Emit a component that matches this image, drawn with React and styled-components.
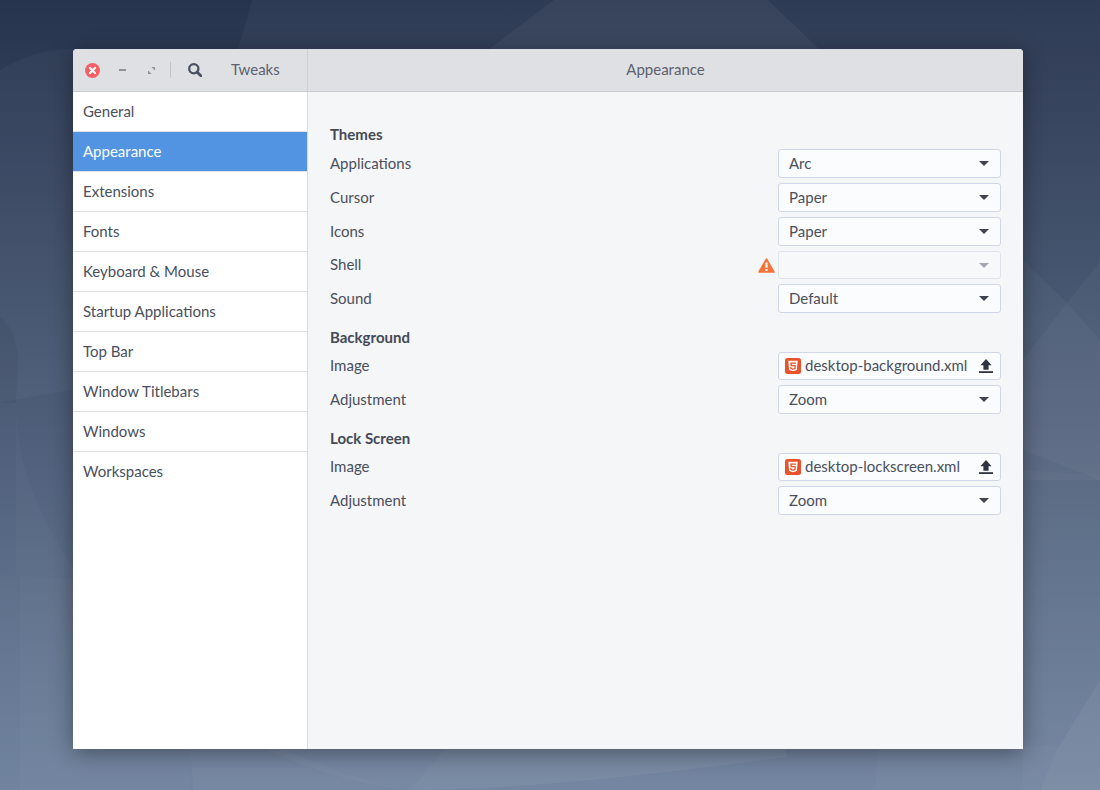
import React from "react";
import styled, { createGlobalStyle } from "styled-components";

const Global = createGlobalStyle`
  html, body { margin: 0; padding: 0; }
  body { font-family: "Lato", "Noto Sans", sans-serif; font-size: 15px; color: #4a4f5c; }
  * { box-sizing: border-box; }
`;

const Desktop = styled.div`
  position: relative;
  width: 1100px;
  height: 790px;
  overflow: hidden;
  padding: 49px 77px 41px 73px;
  background: linear-gradient(180deg, #27344e 0%, #6f829e 100%);
`;
const WallpaperSvg = styled.svg`
  position: absolute;
  inset: 0;
  width: 1100px;
  height: 790px;
`;
const Window = styled.div`
  position: relative;
  width: 950px;
  height: 700px;
  border-radius: 4px 4px 0 0;
  overflow: hidden;
  display: flex;
  flex-direction: column;
  background: #f5f6f7;
`;
const Shadow = styled.div`
  position: absolute;
  left: 73px;
  top: 49px;
  width: 950px;
  height: 700px;
  border-radius: 4px 4px 0 0;
  box-shadow: 0 4px 22px rgba(0, 0, 0, 0.38);
`;
const Header = styled.header`
  display: flex;
  height: 43px;
  flex: none;
  background: #dfe0e4;
  border-bottom: 1px solid #c9cbd1;
`;
const HeaderLeft = styled.div`
  width: 235px;
  flex: none;
  display: flex;
  align-items: center;
  border-right: 1px solid #cdcfd4;
  position: relative;
`;
const WinButton = styled.span`
  width: ${(p) => p.$w}px;
  flex: none;
  display: flex;
  justify-content: center;
  align-items: center;
`;
const Divider = styled.span`
  width: 1px;
  height: 16px;
  background: #c3c5ca;
  flex: none;
  margin: 0 8px 0 0;
`;
const AppTitle = styled.span`
  margin-left: 20px;
  padding-bottom: 2px;
  color: #5c616c;
`;
const PageTitle = styled.div`
  flex: 1;
  text-align: center;
  line-height: 40px;
  color: #5c616c;
`;
const Body = styled.div`
  flex: 1;
  display: flex;
  min-height: 0;
`;
const Sidebar = styled.nav`
  width: 235px;
  flex: none;
  background: #fff;
  border-right: 1px solid #d9dbdf;
`;
const SideItem = styled.div`
  height: 40px;
  padding: 0 0 1px 10px;
  display: flex;
  align-items: center;
  border-bottom: 1px solid ${(p) => (p.$last ? "transparent" : "#dfe1e5")};
  color: ${(p) => (p.$active ? "#fff" : "#4a4f5c")};
  background: ${(p) => (p.$active ? "#5294e2" : "transparent")};
`;
const Content = styled.main`
  flex: 1;
  padding: 33px 22px 0 22px;
  display: flex;
  flex-direction: column;
`;
const Section = styled.section`
  display: flex;
  flex-direction: column;
  gap: 5px;
  & + & { margin-top: 15px; }
`;
const Heading = styled.h2`
  margin: 0 0 -1px;
  height: 20px;
  line-height: 18px;
  font-size: 15px;
  font-weight: 700;
  color: #444955;
`;
const Row = styled.div`
  display: flex;
  align-items: center;
  height: ${(p) => p.$h || 29}px;
`;
const Label = styled.span`
  flex: 1;
  padding-bottom: 2px;
`;
const Warn = styled.svg`
  margin-right: 3px;
  flex: none;
`;
const Control = styled.div`
  width: 223px;
  height: 100%;
  flex: none;
  display: flex;
  align-items: center;
  border: 1px solid ${(p) => (p.$disabled ? "#dfe3ec" : "#cfd6e6")};
  border-radius: 3px;
  background: ${(p) => (p.$disabled ? "#f7f8f9" : "#fbfcfd")};
  padding: ${(p) => (p.$file ? "0 7px 0 6px" : "0 11px 0 10px")};
`;
const ControlText = styled.span`
  flex: 1;
  min-width: 0;
  white-space: nowrap;
  padding-bottom: 2px;
`;
const FileIcon = styled.svg`
  flex: none;
  margin-right: 4px;
`;

const Caret = ({ disabled }) => (
  <svg width="10" height="5" viewBox="0 0 10 5">
    <path d="M0 0H10L5 5Z" fill={disabled ? "#a3a6ae" : "#3f4350"} />
  </svg>
);

const Upload = () => (
  <svg width="14" height="14" viewBox="0 0 14 14">
    <path d="M7 0L12.6 6.2H9.6V10.8H4.4V6.2H1.4Z" fill="#2f3440" />
    <rect x="0" y="12.2" width="14" height="1.8" fill="#2f3440" />
  </svg>
);

const Html = () => (
  <FileIcon width="16" height="16" viewBox="0 0 16 16">
    <rect width="16" height="16" rx="2.5" fill="#e8532b" />
    <path
      fillRule="evenodd"
      d="M3.3 2.8H12.7L11.9 12L8 13.2L4.1 12ZM5.3 4.6L5.6 8.2H9.6L9.5 9.9L8 10.4L6.5 9.9L6.4 9H5.2L5.4 10.9L8 11.7L10.6 10.9L10.9 7H6.8L6.7 5.8H11L11.1 4.6Z"
      fill="#fff"
    />
  </FileIcon>
);

const Select = ({ value, disabled }) => (
  <Control $disabled={disabled}>
    <ControlText>{value}</ControlText>
    <Caret disabled={disabled} />
  </Control>
);

const FilePick = ({ value }) => (
  <Control $file>
    <Html />
    <ControlText>{value}</ControlText>
    <Upload />
  </Control>
);

const Wallpaper = () => (
  <WallpaperSvg viewBox="0 0 1100 790">
    <g fill="#fff">
      <path d="M252 0L238 50L190 749L193 790H1100V0Z" fillOpacity="0.035" />
      <path d="M554 0L488 50L380 749H900L820 50L768 0Z" fillOpacity="0.045" />
      <path d="M0 70Q40 44 90 50L500 60V380Q200 360 0 403Z" fillOpacity="0.03" />
      <path d="M0 575Q100 582 190 575V790H0Z" fillOpacity="0.015" />
      <path d="M16 403C16 480 50 540 110 620C170 700 300 770 410 790H20V575H16Z" fillOpacity="0.025" />
      <path d="M265 749C310 770 360 785 410 790L445 749Z" fillOpacity="0.03" />
      <path d="M410 790L445 749H785L787 757C650 775 520 790 410 790Z" fillOpacity="0.05" />
      <path d="M877 749L875 790H1040L1060 745Z" fillOpacity="0.02" />
      <path d="M1023 260L1067 303L1100 340V480L1023 450Z" fillOpacity="0.03" />
      <path d="M1100 262L1067 303L1023 360V480L1100 480Z" fillOpacity="0.03" />
      <path d="M1023 470L1100 475V790H1023Z" fillOpacity="0.025" />
      <path d="M1100 680L1057 750L1040 790H1100Z" fillOpacity="0.05" />
    </g>
    <path d="M0 317C12 325 18 345 18 362C18 380 16 390 16 403H0Z" fill="#000" fillOpacity="0.05" />
  </WallpaperSvg>
);

const nav = [
  "General",
  "Appearance",
  "Extensions",
  "Fonts",
  "Keyboard & Mouse",
  "Startup Applications",
  "Top Bar",
  "Window Titlebars",
  "Windows",
  "Workspaces",
];

export default function App() {
  return (
    <Desktop>
      <Global />
      <Wallpaper />
      <Shadow />
      <Window>
        <Header>
          <HeaderLeft>
            <WinButton $w={38}>
              <svg width="15" height="15" viewBox="0 0 15 15">
                <circle cx="7.5" cy="7.5" r="7.5" fill="#f46067" />
                <path d="M5 5L10 10M10 5L5 10" stroke="#fff" strokeWidth="2.2" strokeLinecap="round" />
              </svg>
            </WinButton>
            <WinButton $w={22}>
              <svg width="7" height="2" viewBox="0 0 7 2">
                <rect width="7" height="2" fill="#8f9299" />
              </svg>
            </WinButton>
            <WinButton $w={37}>
              <svg width="7" height="7" viewBox="0 0 7 7">
                <path d="M7 0V3.6L3.4 0ZM0 7V3.4L3.6 7Z" fill="#8f9299" />
              </svg>
            </WinButton>
            <Divider />
            <WinButton $w={32}>
              <svg width="14" height="14" viewBox="0 0 14 14">
                <circle cx="5.8" cy="5.8" r="4.6" fill="none" stroke="#4a5060" strokeWidth="2.3" />
                <path d="M9 9L12.8 12.8" stroke="#4a5060" strokeWidth="2.8" strokeLinecap="round" />
              </svg>
            </WinButton>
            <AppTitle>Tweaks</AppTitle>
          </HeaderLeft>
          <PageTitle>Appearance</PageTitle>
        </Header>
        <Body>
          <Sidebar>
            {nav.map((n, i) => (
              <SideItem key={n} $active={n === "Appearance"} $last={i === nav.length - 1}>
                {n}
              </SideItem>
            ))}
          </Sidebar>
          <Content>
            <Section>
              <Heading>Themes</Heading>
              <Row><Label>Applications</Label><Select value="Arc" /></Row>
              <Row><Label>Cursor</Label><Select value="Paper" /></Row>
              <Row><Label>Icons</Label><Select value="Paper" /></Row>
              <Row $h={28}>
                <Label>Shell</Label>
                <Warn width="17" height="15" viewBox="0 0 17 15">
                  <path
                    fillRule="evenodd"
                    d="M8.5 0.3C8.9 0.3 9.2 0.5 9.4 0.9L16.6 13.4C17 14.1 16.5 14.8 15.8 14.8H1.2C0.5 14.8 0 14.1 0.4 13.4L7.6 0.9C7.8 0.5 8.1 0.3 8.5 0.3ZM7.4 4.5V9.8H9.6V4.5ZM7.4 11V13H9.6V11Z"
                    fill="#f4733a"
                  />
                </Warn>
                <Select value="" disabled />
              </Row>
              <Row><Label>Sound</Label><Select value="Default" /></Row>
            </Section>
            <Section>
              <Heading>Background</Heading>
              <Row $h={28}><Label>Image</Label><FilePick value="desktop-background.xml" /></Row>
              <Row><Label>Adjustment</Label><Select value="Zoom" /></Row>
            </Section>
            <Section>
              <Heading>Lock Screen</Heading>
              <Row $h={28}><Label>Image</Label><FilePick value="desktop-lockscreen.xml" /></Row>
              <Row><Label>Adjustment</Label><Select value="Zoom" /></Row>
            </Section>
          </Content>
        </Body>
      </Window>
    </Desktop>
  );
}
